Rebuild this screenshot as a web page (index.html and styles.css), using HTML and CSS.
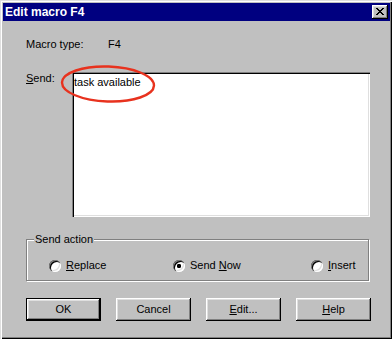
FILE: index.html
```html
<!DOCTYPE html>
<html>
<head>
    <meta charset="UTF-8">
    <title>Edit macro F4</title>
    <link rel="stylesheet" href="styles.css">
</head>
<body>
    <div class="window">
        <div class="titlebar">
            <span class="title">Edit macro F4</span>
            <button type="button" class="close" aria-label="Close">
                <svg width="8" height="7" viewBox="0 0 8 7" shape-rendering="crispEdges">
                    <path fill="#000" d="M0 0h2v1H0zM6 0h2v1H6zM1 1h2v1H1zM5 1h2v1H5zM2 2h4v1H2zM3 3h2v1H3zM2 4h4v1H2zM1 5h2v1H1zM5 5h2v1H5zM0 6h2v1H0zM6 6h2v1H6z"/>
                </svg>
            </button>
        </div>

        <div class="content">
            <div class="row">
                <span class="label label-type">Macro type:</span>
                <span>F4</span>
            </div>

            <div class="row row-send">
                <label class="label label-send" for="send-text"><u>S</u>end:</label>
                <textarea id="send-text" class="field">task available</textarea>
            </div>

            <div class="group">
                <div class="group-title">Send action</div>
                <div class="options">
                    <label class="option"><span class="radio"></span><span><u>R</u>eplace</span></label>
                    <label class="option"><span class="radio checked"></span><span>Send <u>N</u>ow</span></label>
                    <label class="option"><span class="radio"></span><span><u>I</u>nsert</span></label>
                </div>
            </div>

            <div class="buttons">
                <button type="button" class="btn btn-default">OK</button>
                <button type="button" class="btn">Cancel</button>
                <button type="button" class="btn"><u>E</u>dit...</button>
                <button type="button" class="btn"><u>H</u>elp</button>
            </div>
        </div>

        <!-- red marker drawn over the screenshot -->
        <svg class="marker" width="100" height="44" viewBox="0 0 100 44">
            <ellipse cx="48" cy="21" rx="46" ry="17.5" fill="none" stroke="#e8321e" stroke-width="2.4" transform="rotate(2 48 21)"/>
        </svg>
    </div>
</body>
</html>
```

FILE: styles.css
```css
*
{
    box-sizing: border-box;
}

body
{
    margin: 0;
    font-family: 'Liberation Sans', Arial, sans-serif;
    font-size: 11px;
    line-height: 13px;
    color: #000;
}

.window
{
    position: relative;
    width: 392px;
    height: 339px;
    padding: 3px 2px 2px 3px;
    background: #c0c0c0;
    box-shadow: inset 1px 1px 0 #dfdfdf, inset 2px 2px 0 #fff,
                inset -1px -1px 0 #000, inset -2px -2px 0 #808080;
}

.titlebar
{
    display: flex;
    align-items: center;
    justify-content: space-between;
    height: 18px;
    padding: 0 2px;
    background: #000080;
}

.title
{
    color: #fff;
    font-weight: bold;
    font-size: 12px;
}

.close
{
    display: flex;
    align-items: flex-start;
    width: 16px;
    height: 14px;
    padding: 3px 0 0 4px;
    border: none;
    background: #c0c0c0;
    box-shadow: inset -1px -1px 0 #000, inset 1px 1px 0 #fff,
                inset -2px -2px 0 #808080, inset 2px 2px 0 #dfdfdf;
}

.content
{
    padding-left: 23px;
}

.row
{
    display: flex;
    margin-top: 17px;
}

.row-send
{
    margin-top: 21px;
}

.label-type { width: 82px; }
.label-send { width: 46px; }

.field
{
    width: 298px;
    height: 145px;
    padding: 4px 2px 2px 2px;
    border: none;
    resize: none;
    outline: none;
    font: inherit;
    background: #fff;
    box-shadow: inset 1px 1px 0 #808080, inset 2px 2px 0 #000,
                inset -1px -1px 0 #fff, inset -2px -2px 0 #dfdfdf;
}

.group
{
    width: 343px;
    margin-top: 22px;
    padding: 0 0 8px 0;
    border: 1px solid #808080;
    box-shadow: inset 1px 1px 0 #fff, 1px 1px 0 #fff;
}

.group-title
{
    width: max-content;
    margin: -7px 0 0 7px;
    padding: 0 1px;
    background: #c0c0c0;
}

.options
{
    display: grid;
    grid-template-columns: 124px 138px auto;
    margin-top: 13px;
    padding-left: 22px;
}

.option
{
    display: flex;
    align-items: center;
    gap: 5px;
}

.radio
{
    width: 12px;
    height: 12px;
    border-radius: 50%;
    background: #fff;
    box-shadow: inset 1px 1px 0 #808080, inset 2px 2px 0 #000,
                inset -1px -1px 0 #fff, inset -2px -2px 0 #dfdfdf;
}

.radio.checked
{
    background: radial-gradient(circle at 6px 6px, #000 0 2px, #fff 2.3px);
}

.buttons
{
    display: flex;
    gap: 15px;
    margin-top: 17px;
}

.btn
{
    width: 75px;
    height: 23px;
    padding: 0;
    border: none;
    font: inherit;
    color: #000;
    background: #c0c0c0;
    box-shadow: inset -1px -1px 0 #000, inset 1px 1px 0 #fff,
                inset -2px -2px 0 #808080, inset 2px 2px 0 #dfdfdf;
}

.btn-default
{
    border: 1px solid #000;
}

.marker
{
    position: absolute;
    left: 60px;
    top: 63px;
}
```
